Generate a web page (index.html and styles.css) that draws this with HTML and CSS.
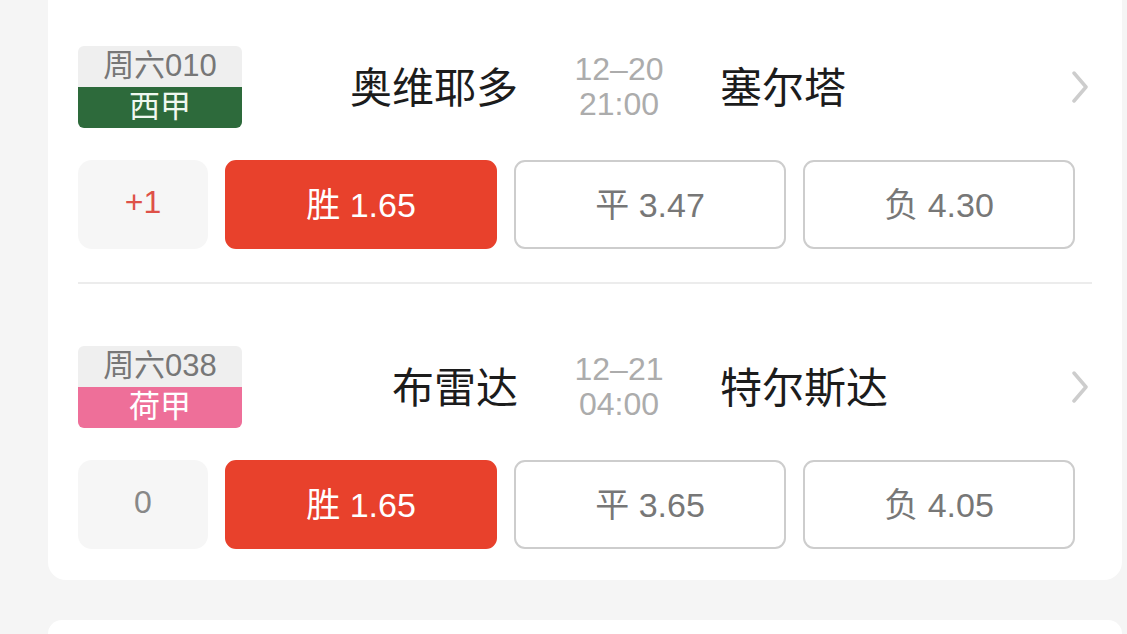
FILE: index.html
```html
<!DOCTYPE html>
<html lang="zh-CN">
<head>
    <meta charset="UTF-8">
    <meta name="viewport" content="width=device-width, initial-scale=1.0">
    <title>竞彩足球</title>
    <link rel="stylesheet" href="styles.css">
</head>
<body>

    <div class="card">
        <div class="match">
            <div class="match-head">
                <div class="badge">
                    <div class="badge-no">周六010</div>
                    <div class="badge-league league-liga">西甲</div>
                </div>
                <div class="team home">奥维耶多</div>
                <div class="time">
                    <div>12–20</div>
                    <div>21:00</div>
                </div>
                <div class="team away">塞尔塔</div>
                <svg class="arrow" width="16" height="32" viewBox="0 0 16 32">
                    <polyline points="2,2 14,16 2,30" fill="none" stroke="#cdcdcd" stroke-width="3.5" stroke-linecap="round" stroke-linejoin="round"/>
                </svg>
            </div>
            <div class="odds">
                <div class="handicap red">+1</div>
                <div class="odd selected">胜 1.65</div>
                <div class="odd">平 3.47</div>
                <div class="odd">负 4.30</div>
            </div>
        </div>

        <div class="match">
            <div class="match-head">
                <div class="badge">
                    <div class="badge-no">周六038</div>
                    <div class="badge-league league-ere">荷甲</div>
                </div>
                <div class="team home">布雷达</div>
                <div class="time">
                    <div>12–21</div>
                    <div>04:00</div>
                </div>
                <div class="team away">特尔斯达</div>
                <svg class="arrow" width="16" height="32" viewBox="0 0 16 32">
                    <polyline points="2,2 14,16 2,30" fill="none" stroke="#cdcdcd" stroke-width="3.5" stroke-linecap="round" stroke-linejoin="round"/>
                </svg>
            </div>
            <div class="odds">
                <div class="handicap">0</div>
                <div class="odd selected">胜 1.65</div>
                <div class="odd">平 3.65</div>
                <div class="odd">负 4.05</div>
            </div>
        </div>
    </div>

    <div class="card next"></div>

</body>
</html>
```

FILE: styles.css
```css
body {
    font-family: 'Liberation Sans', 'Noto Sans CJK SC', sans-serif;
    background-color: #f5f5f5;
    margin: 0;
    padding: 0;
}
.card {
    box-sizing: border-box;
    width: 1074px;
    margin-left: 48px;
    background-color: #fff;
    border-radius: 0 0 18px 18px;
    padding: 46px 30px 31px;
}
.card.next {
    margin-top: 40px;
    height: 14px;
    padding: 0;
    border-radius: 18px 18px 0 0;
}
.match + .match {
    margin-top: 33px;
    padding-top: 62px;
    border-top: 2px solid #ececec;
}
.match-head {
    display: flex;
    align-items: center;
    height: 82px;
}
.badge {
    width: 164px;
    border-radius: 6px;
    overflow: hidden;
    text-align: center;
    font-size: 31px;
}
.badge-no {
    height: 41px;
    line-height: 39px;
    background-color: #efefef;
    color: #777;
}
.badge-league {
    height: 41px;
    line-height: 39px;
    color: #f0f8f0;
}
.league-liga {
    background-color: #2d6a3b;
}
.league-ere {
    background-color: #ee6f99;
    color: #fff;
}
.team {
    font-size: 42px;
    color: #1c1c1c;
    padding-bottom: 5px;
}
.home {
    width: 276px;
    text-align: right;
}
.time {
    width: 202px;
    text-align: center;
    font-size: 32px;
    line-height: 35px;
    color: #acacac;
}
.away {
    flex: 1;
}
.arrow {
    margin-right: 4px;
}
.odds {
    display: grid;
    grid-template-columns: 130px repeat(3, 1fr);
    column-gap: 17px;
    margin-top: 32px;
    padding-right: 17px;
}
.handicap, .odd {
    box-sizing: border-box;
    height: 89px;
    padding-bottom: 5px;
    display: flex;
    align-items: center;
    justify-content: center;
    font-size: 34px;
}
.handicap {
    background-color: #f6f6f6;
    border-radius: 14px;
    color: #888;
    font-size: 32px;
}
.handicap.red {
    color: #de5148;
}
.odd {
    border: 2px solid #cdcdcd;
    border-radius: 11px;
    color: #777;
}
.odd.selected {
    border-color: #e8412c;
    background-color: #e8412c;
    color: #fff;
}
```
